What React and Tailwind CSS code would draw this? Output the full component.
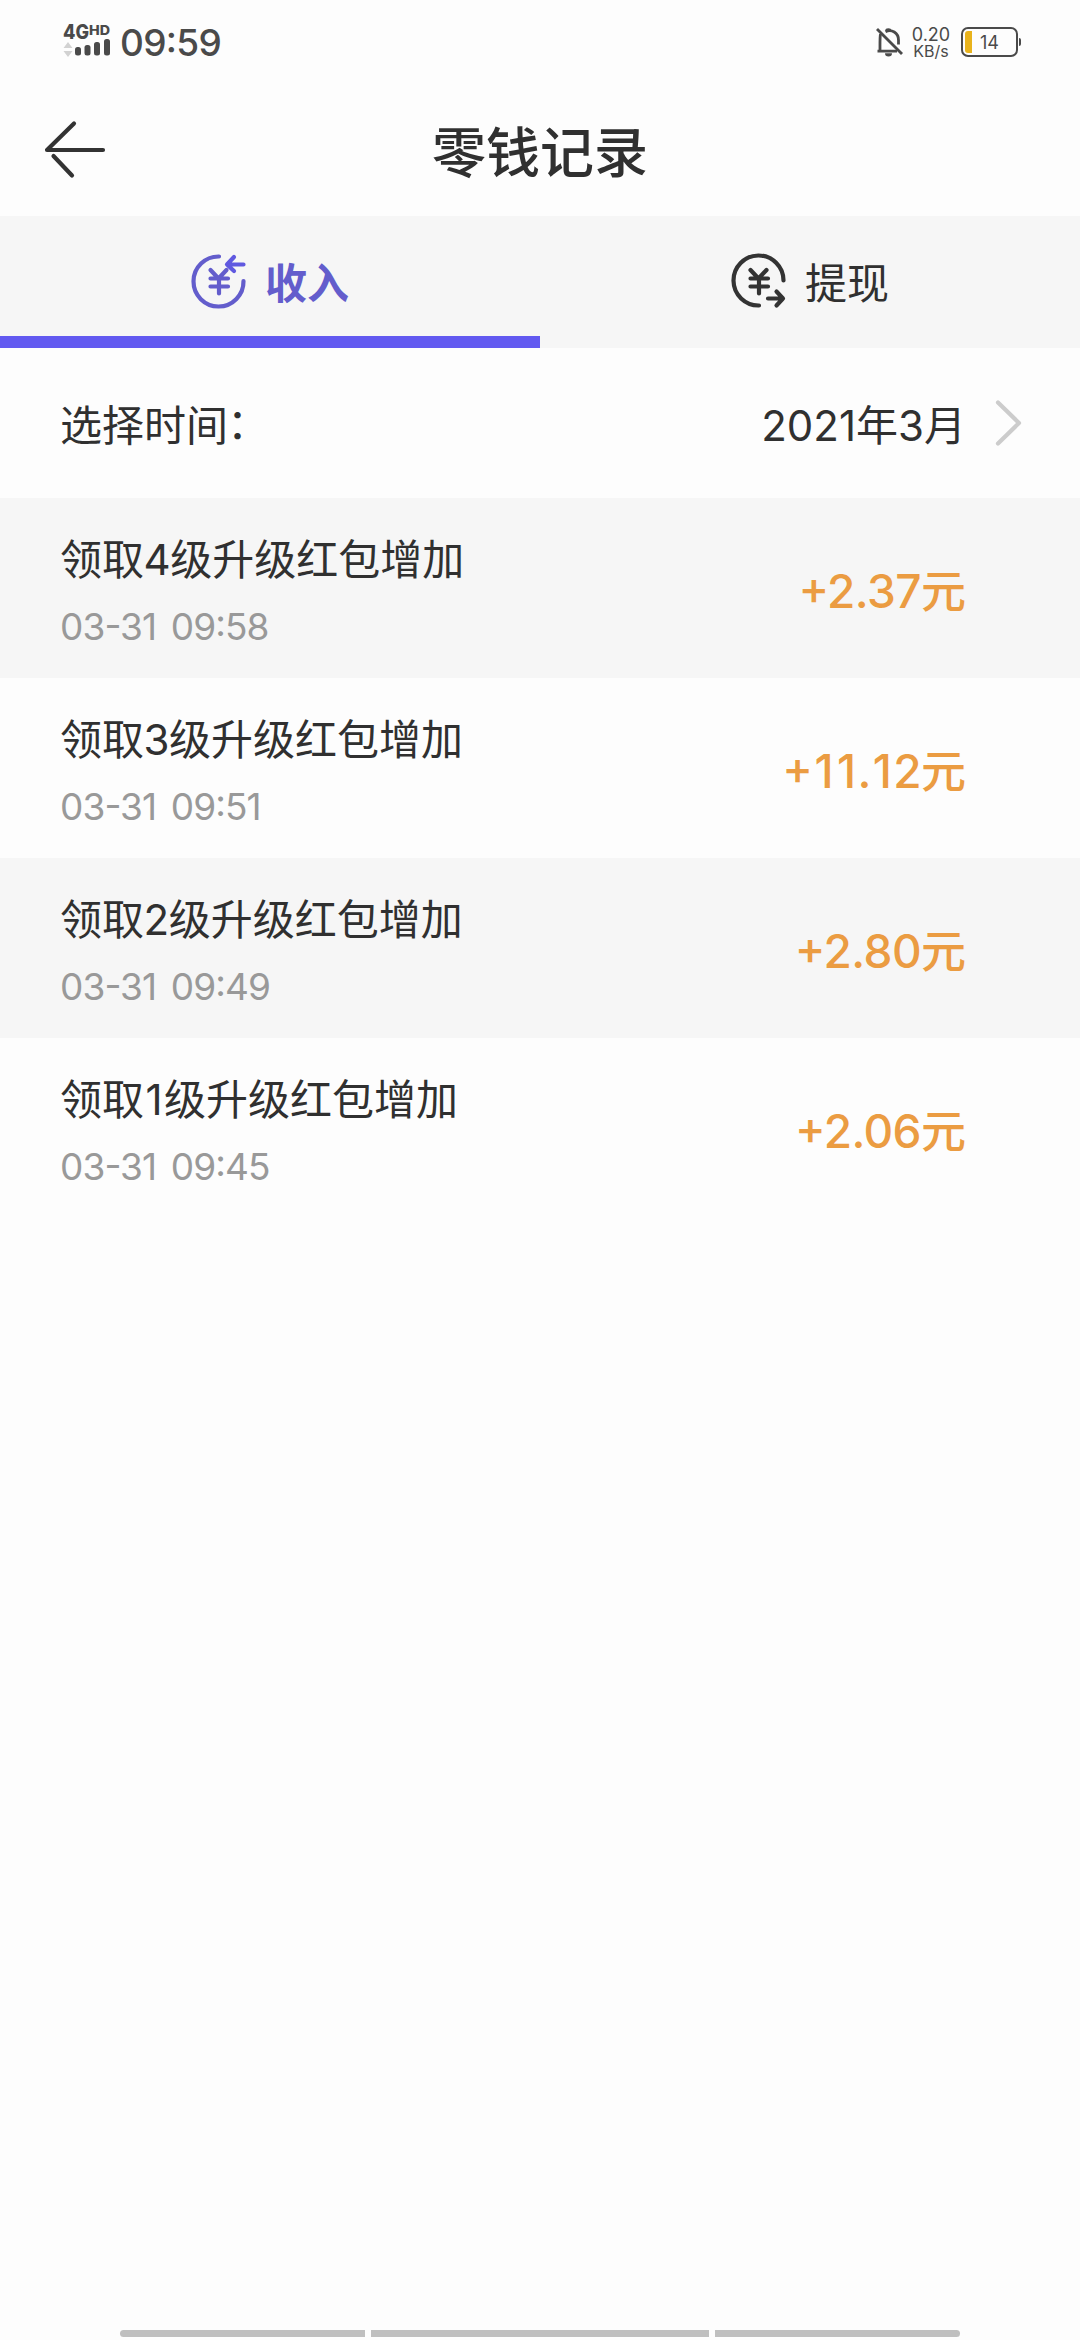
const records = [
  { level: 4, time: "03-31 09:58", amount: "+2.37" },
  { level: 3, time: "03-31 09:51", amount: "+11.12" },
  { level: 2, time: "03-31 09:49", amount: "+2.80" },
  { level: 1, time: "03-31 09:45", amount: "+2.06" },
];

function Signal() {
  return (
    <svg className="mt-[-10px] h-[46px] w-[54px]" viewBox="0 -10 54 46" fill="#4a4a4a">
      <text x="0" y="15" fontFamily="Inter, sans-serif" fontWeight="800" fontSize="20" textLength="26" lengthAdjust="spacingAndGlyphs">4G</text>
      <text x="26" y="10.5" fontFamily="Inter, sans-serif" fontWeight="800" fontSize="13" textLength="21" lengthAdjust="spacingAndGlyphs">HD</text>
      <path d="M5 18l4.5 6H.5zM.5 27h9L5 33z" fill="#d2d2d2" />
      <rect x="12" y="23" width="6" height="8.5" rx="2.5" />
      <rect x="21.5" y="21" width="6" height="10.5" rx="2.5" />
      <rect x="31" y="18" width="6" height="13.5" rx="2.5" />
      <rect x="41" y="15" width="6" height="16.5" rx="2.5" />
    </svg>
  );
}

function Muted() {
  return (
    <svg className="h-[30px] w-[28px]" viewBox="0 0 28 30" fill="none" stroke="#4a4a4a" strokeWidth="2.8">
      <path d="M4.500 7C3.800 10 4 16 4 24.200M1.500 24.200h19.500M9.500 4.800C15.500 1.500 22.500 6 22.500 13v4.500" />
      <path d="M9.300 3.600a3 2.400 0 0 1 6 0z" fill="#4a4a4a" stroke="none" />
      <path d="M1 2l25 25" />
      <path d="M9 26.300h7a3.500 3.200 0 0 1-7 0z" fill="#4a4a4a" stroke="none" />
    </svg>
  );
}

function Yen() {
  return <path d="M19.500 17l8 8.500 8-8.500M19.500 25.500h17.500M19.500 33.500h17.500M28 25.500v15" />;
}

function IncomeIcon() {
  return (
    <svg className="h-[56px] w-[58px]" viewBox="0 0 58 56" fill="none" stroke="#635dcc" strokeWidth="4.200" strokeLinecap="round" strokeLinejoin="round">
      <path d="M28 3.500A25 25 0 1 0 52.500 28" />
      <Yen />
      <path d="M52.500 11.500H36.500M43 4L36 11.500l7 6.500" stroke="#6059e0" />
    </svg>
  );
}

function WithdrawIcon() {
  return (
    <svg className="h-[56px] w-[58px]" viewBox="0 0 58 56" fill="none" stroke="#333333" strokeWidth="4.200" strokeLinecap="round" strokeLinejoin="round">
      <path d="M52.500 27.500A25 25 0 1 0 28 52.500" />
      <Yen />
      <path d="M37 45.500h15M45.500 38.500l6.500 7-6.500 7" />
    </svg>
  );
}

function Amount({ value }) {
  return (
    <span className="text-[45px] font-medium leading-none text-[#eb9c42]">
      <span className="text-[46px] font-[550] tracking-[-0.6px] [font-feature-settings:'case']">
        {value.split("").map((c, i) => (
          <span key={i} className={c === "1" ? "mx-[2px]" : ""}>{c}</span>
        ))}
      </span>
      元
    </span>
  );
}

export default function App() {
  return (
    <div className="flex h-[2340px] w-[1080px] flex-col overflow-hidden bg-[#fdfdfd] font-['Inter','Noto_Sans_CJK_SC',sans-serif] text-[#303030]">
      <div className="flex h-[84px] shrink-0 items-center pl-[63px] pr-[59px] text-[#4a4a4a]">
        <Signal />
        <span className="ml-[3px] mt-px text-[37px] font-medium leading-[48px] tracking-[-0.7px] [font-feature-settings:'case']">09:59</span>
        <div className="ml-auto flex items-center">
          <Muted />
          <div className="ml-[7px] mt-px flex w-[40px] flex-col items-center whitespace-nowrap text-[18px] leading-[17px]">
            <span>0.20</span>
            <span className="text-[16px]">KB/s</span>
          </div>
          <div className="ml-[10px] flex items-center">
            <div className="flex h-[30px] w-[57px] items-center rounded-[7px] border-[2.5px] border-[#4a4a4a] p-[2px]">
              <div className="h-[22px] w-[7px] rounded-l-[3px] bg-[#e9b31c]" />
              <span className="ml-[8px] mt-px text-[18px] leading-none">14</span>
            </div>
            <div className="ml-px h-[8px] w-[2px] rounded-r bg-[#4a4a4a]" />
          </div>
        </div>
      </div>

      <header className="grid h-[132px] shrink-0 grid-cols-[1fr_auto_1fr] items-center px-[43px]">
        <svg className="mb-[2px] h-[64px] w-[64px]" viewBox="0 0 64 64" fill="none" stroke="#333" strokeWidth="4.200" strokeLinecap="round" strokeLinejoin="round">
          <path d="M60 33H4L31 6.500M10.500 39L29 58.500" />
        </svg>
        <h1 className="pt-[8px] text-[54px] font-medium leading-none">零钱记录</h1>
      </header>

      <nav className="grid h-[132px] shrink-0 grid-cols-2 bg-[#f6f6f6] text-[42px]">
        <div className="flex items-center border-b-[12px] border-[#6259f0] pl-[191px] pt-[10px] font-bold text-[#635dcc]">
          <IncomeIcon />
          <span className="ml-[16px] pt-[6px] leading-[60px]">收入</span>
        </div>
        <div className="flex items-center border-b-[12px] border-transparent pl-[191px] pt-[10px]">
          <WithdrawIcon />
          <span className="ml-[16px] pt-[6px] leading-[60px]">提现</span>
        </div>
      </nav>

      <div className="flex h-[150px] shrink-0 items-center pl-[60px] pr-[58px] text-[42px]">
        <span className="pt-[5px]">选择时间<span className="-ml-px inline-block -translate-y-[2px]">：</span></span>
        <span className="ml-auto pt-[5px]">2021年3月</span>
        <svg className="ml-[29px] h-[48px] w-[27px]" viewBox="0 0 27 48" fill="none" stroke="#cccccc" strokeWidth="4.200" strokeLinecap="round" strokeLinejoin="round">
          <path d="M3 3.500L24 24L3 44.500" />
        </svg>
      </div>

      <div className="flex flex-col">
        {records.map((r) => (
          <div key={r.level} className="flex h-[180px] items-center justify-between pl-[60px] pr-[114px] pt-[5px] odd:bg-[#f6f6f6]">
            <div className="flex flex-col">
              <span className="text-[42px] leading-[60px]">
                领取<span className={r.level === 1 ? "mx-[1.5px]" : "-mx-[0.5px]"}>{r.level}</span>级升级红包增加
              </span>
              <span className="mt-[12px] text-[37px] leading-[50px] tracking-[-0.9px] text-[#999999] [font-feature-settings:'case'] [word-spacing:5px]">{r.time}</span>
            </div>
            <Amount value={r.amount} />
          </div>
        ))}
      </div>

      <div className="mt-auto mb-[3px] flex h-[7px] shrink-0 gap-[6px] px-[120px]">
        <div className="w-[245px] rounded-l-full bg-[#bfbfbf]" />
        <div className="w-[338px] bg-[#bfbfbf]" />
        <div className="w-[245px] rounded-r-full bg-[#bfbfbf]" />
      </div>
    </div>
  );
}
